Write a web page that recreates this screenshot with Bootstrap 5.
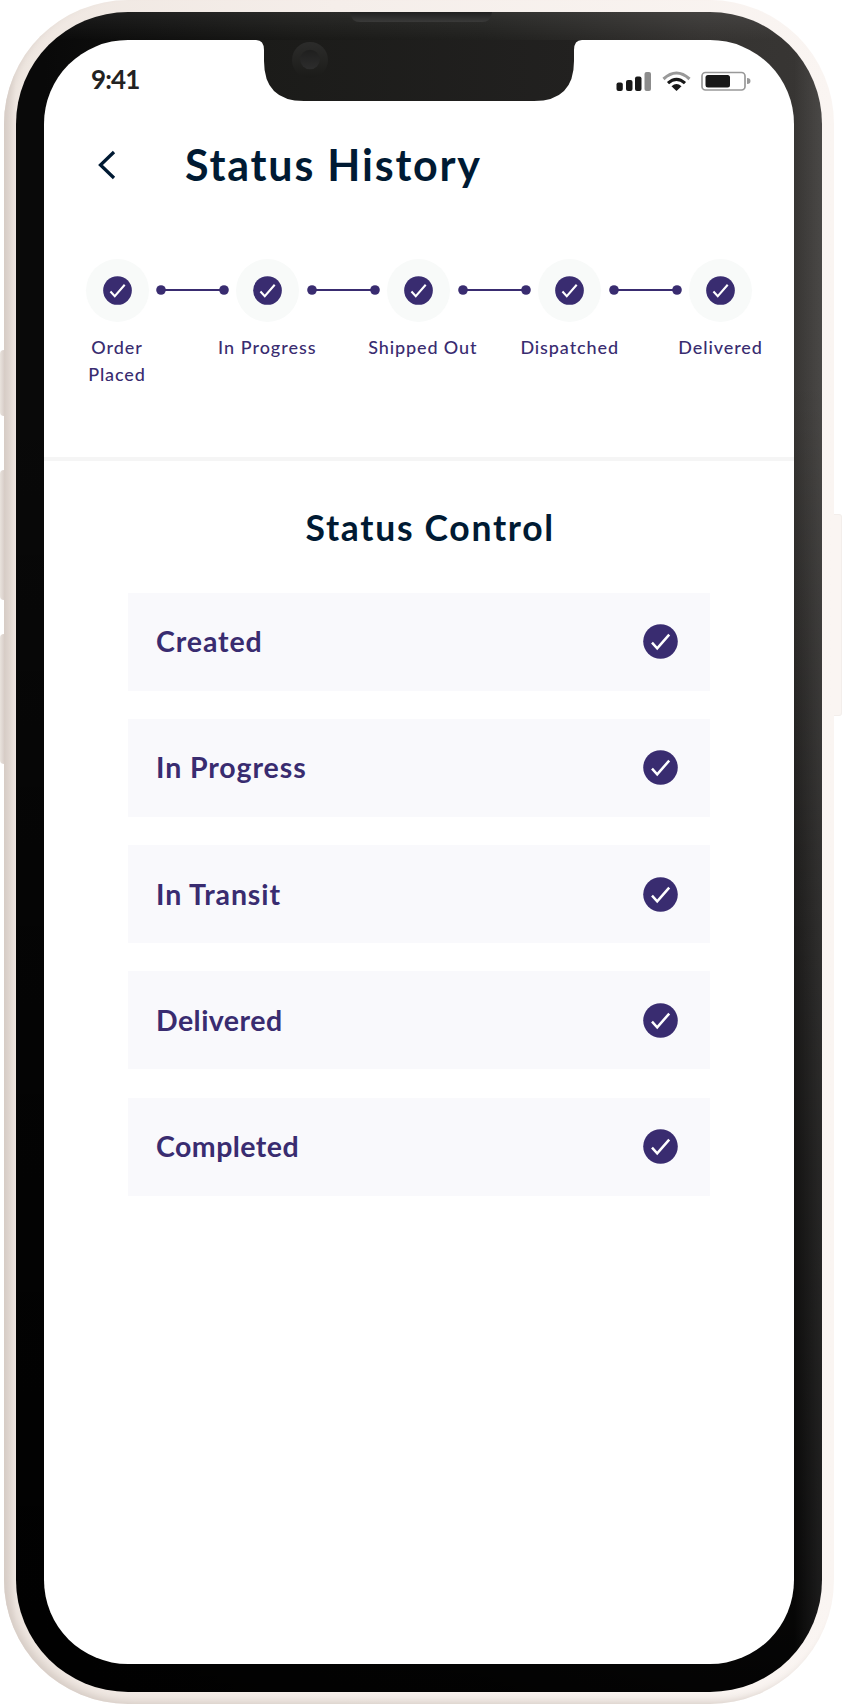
<!DOCTYPE html>
<html lang="en">
<head>
<meta charset="utf-8">
<meta name="viewport" content="width=device-width, initial-scale=1">
<title>Status History</title>
<link href="https://cdn.jsdelivr.net/npm/bootstrap@5.3.0/dist/css/bootstrap.min.css" rel="stylesheet">
<style>
  :root { --ink: #001a33; --violet: #392c70; }
  body { font-family: Lato, "Open Sans", sans-serif; background: #fff; color: var(--ink); overflow: hidden; }
  .device { width: 830px; height: 1704px; margin-left: 4px; padding: 12px; border-radius: 124px;
    background: linear-gradient(90deg, #dcd2cd 0, #efe7e1 12px, #f5eeea 40%, #faf5f2 100%);
    box-shadow: inset 6px -5px 8px -3px #d5cbc4; }
  .bezel { height: 1680px; padding: 28px; border-radius: 112px;
    background: linear-gradient(90deg, rgba(255,255,255,0) 96.5%, rgba(255,255,255,.09) 100%),
      linear-gradient(rgba(255,255,255,.07), rgba(255,255,255,0) 28px),
      linear-gradient(rgba(0,0,0,0) 22%, rgba(0,0,0,.45) 50%, rgba(0,0,0,.65) 68%, rgba(0,0,0,.93) 100%),
      linear-gradient(90deg, #090909 0, #090909 28px, #191917 35%, #20201e 58%, #353331 85%, #383634 100%); }
  .screen { height: 1624px; border-radius: 84px; background: #fff; overflow: hidden; }
  .notch { left: 256px; top: 0; }
  .side-key { width: 4px; left: 0; background: linear-gradient(90deg, #e9e3dd, #d9cfca); border-radius: 4px 0 0 4px; }
  .power-key { left: 834px; top: 514px; width: 8px; height: 202px; background: #faf5f2; border: 1px solid #f3eeeb; border-left: 0; border-radius: 0 3px 3px 0; }
  .status-bar { height: 84px; padding: 26px 43px 0 47px; }
  .clock { font-size: 26px; line-height: 26px; font-weight: 700; color: #222; letter-spacing: -.9px; }
  .page-head { height: 84px; padding: 0 0 2px 54px; }
  .page-title { font-size: 43px; line-height: 50px; font-weight: 700; letter-spacing: 1.8px; margin: 0 0 0 69px; }
  .tracker { height: 253px; padding: 51px 0 0 41.5px; border-bottom: 4px solid #f5f5f5; }
  .stage { width: 63px; }
  .halo { width: 63px; height: 63px; background: #f8faf9; }
  .stage-name { font-size: 18px; line-height: 26.5px; font-weight: 500; letter-spacing: .9px; color: var(--violet); margin-top: 12px; text-align: center; }
  .stage:nth-of-type(3) .stage-name { margin-left: 8px; }
  .stage:nth-of-type(2) .stage-name { margin-right: 1px; letter-spacing: 1px; }
  .link-bar { width: 73px; margin: 26px 7.1px 0 7.8px; height: 10px; }
  .section-title { font-size: 35.5px; line-height: 42px; font-weight: 700; letter-spacing: 1.7px; margin: 46px 0 43.5px 261.5px; }
  .status-list { margin: 0 84px; gap: 28.3px; }
  .status-row { height: 98px; padding: 0 32px 0 28px; background: #f9f9fc; border: 0; color: var(--violet); font-size: 28.5px; font-weight: 700; letter-spacing: .9px; }
  .status-row:nth-child(n+4) { letter-spacing: .45px; }
</style>
</head>
<body>
<svg class="d-none">
  <symbol id="tick" viewBox="0 0 35 35"><circle cx="17.5" cy="17.5" r="17.3" fill="#392c70"/><path d="M9 18.7l5.2 5.6L26.2 10.6" fill="none" stroke="#fff" stroke-width="2.5"/></symbol>
  <symbol id="bar" viewBox="0 0 73 10"><path d="M5 5h63" stroke="#392c70" stroke-width="2"/><circle cx="5" cy="5" r="4.8" fill="#392c70"/><circle cx="68" cy="5" r="4.8" fill="#392c70"/></symbol>
</svg>
<div class="position-relative">
  <span class="side-key position-absolute" style="top:350px;height:66px"></span>
  <span class="side-key position-absolute" style="top:470px;height:130px"></span>
  <span class="side-key position-absolute" style="top:634px;height:130px"></span>
  <span class="power-key position-absolute"></span>
  <div class="device">
    <div class="bezel">
      <svg class="notch position-absolute" width="326" height="102" viewBox="256 0 326 102">
        <defs>
          <linearGradient id="notchFill"><stop offset="0" stop-color="#1b1b19"/><stop offset="1" stop-color="#222120"/></linearGradient>
          <linearGradient id="lens" x2="0" y2="1"><stop offset="0" stop-color="#2c2c2b"/><stop offset="1" stop-color="#1b1b19"/></linearGradient>
          <linearGradient id="glass" x2="0" y2="1"><stop offset="0" stop-color="#1f1f1e"/><stop offset="1" stop-color="#2d2d2d"/></linearGradient>
          <linearGradient id="speaker" x2="0" y2="1"><stop offset="0" stop-color="#202020"/><stop offset="1" stop-color="#3a3a39"/></linearGradient>
        </defs>
        <path d="M256 39.9Q264 40 264 50V61Q264 101 304 101H534Q574 101 574 61V50Q574 40 582 39.9Z" fill="url(#notchFill)"/>
        <path d="M350 12H492Q491 22 482 22H360Q351 22 350 12Z" fill="url(#speaker)"/>
        <circle cx="310" cy="60" r="18" fill="url(#lens)"/><circle cx="310" cy="59.500" r="9.800" fill="url(#glass)"/>
      </svg>
      <main class="screen">
        <div class="status-bar d-flex justify-content-between align-items-start">
          <span class="clock">9:41</span>
          <svg width="136" height="22" viewBox="615 70 136 22" style="margin-top:4px">
            <g fill="#181818"><rect x="616.5" y="82.5" width="6.3" height="8.5" rx="2"/><rect x="626" y="80" width="6.5" height="11" rx="2"/><rect x="635" y="76.5" width="6.5" height="14.5" rx="2"/><rect x="644.5" y="72" width="6.5" height="19" rx="2" fill="#8c8c8c"/></g>
            <g fill="none" stroke="#181818" stroke-width="3.1"><path d="M663.5 79Q676.5 67 689.5 79" stroke="#999"/><path d="M668 83.2Q676.5 75.5 685 83.2"/></g><path d="M671.5 86.2Q676.5 82 681.5 86.2L676.5 91Z" fill="#181818"/>
            <rect x="702" y="72.5" width="43" height="17.5" rx="3.5" fill="none" stroke="#999" stroke-width="1.7"/><rect x="705.5" y="75" width="24.5" height="12.5" rx="2.5" fill="#181818"/><path d="M747 78q3.5 0 3.5 3t-3.5 3z" fill="#999"/>
          </svg>
        </div>
        <header class="page-head d-flex align-items-center">
          <svg width="18" height="30" viewBox="0 0 18 30"><path d="M16 2L2.5 15L16 28" fill="none" stroke="#001a33" stroke-width="3.3"/></svg>
          <h1 class="page-title text-nowrap">Status History</h1>
        </header>
        <section class="tracker d-flex align-items-start" id="tracker"></section>
        <h2 class="section-title text-nowrap">Status Control</h2>
        <div class="status-list list-group d-flex flex-column" id="statuses"></div>
      </main>
    </div>
  </div>
</div>
<script src="https://cdn.jsdelivr.net/npm/bootstrap@5.3.0/dist/js/bootstrap.bundle.min.js"></script>
<script>
  document.getElementById('tracker').innerHTML = ['Order<br>Placed', 'In&nbsp;Progress', 'Shipped&nbsp;Out', 'Dispatched', 'Delivered'].map(name =>
    `<div class="stage flex-shrink-0 d-flex flex-column align-items-center"><div class="halo rounded-circle d-flex align-items-center justify-content-center"><svg width="29" height="29"><use href="#tick"/></svg></div><div class="stage-name text-nowrap">${name}</div></div>`
  ).join('<svg class="link-bar flex-shrink-0"><use href="#bar"/></svg>');
  document.getElementById('statuses').innerHTML = ['Created', 'In Progress', 'In Transit', 'Delivered', 'Completed'].map(name =>
    `<div class="status-row list-group-item rounded-0 d-flex justify-content-between align-items-center"><span>${name}</span><svg width="35" height="35"><use href="#tick"/></svg></div>`
  ).join('');
</script>
</body>
</html>
